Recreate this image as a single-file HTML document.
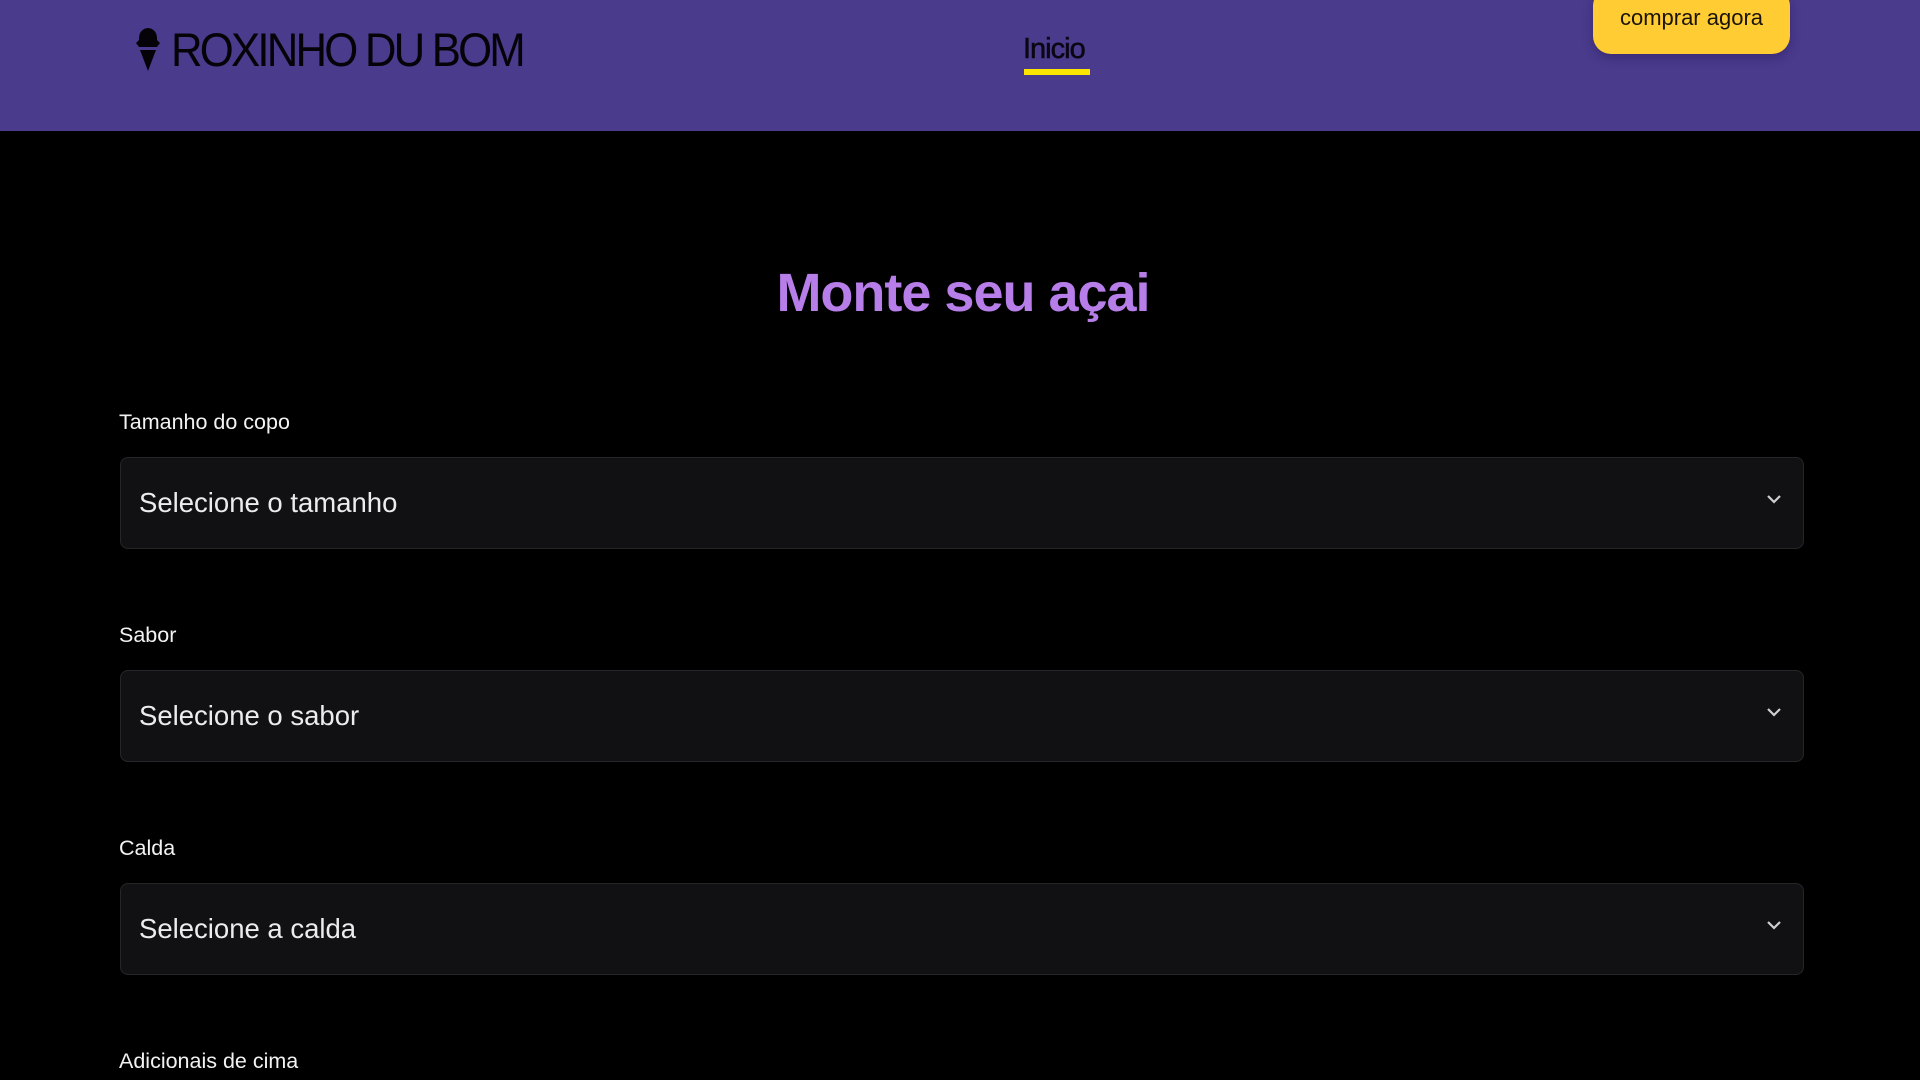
<!DOCTYPE html>
<html><head><meta charset="utf-8"><style>
*{margin:0;padding:0;box-sizing:border-box}
body{width:1920px;height:1080px;background:#000;overflow:hidden;font-family:"Liberation Sans",sans-serif;position:relative}
header{position:absolute;left:0;top:0;width:1920px;height:131px;background:#4a3b8c}
.logo{position:absolute;left:171px;top:22px;font-size:47px;color:#050308;letter-spacing:-3px;transform:scaleX(.93);transform-origin:left;white-space:nowrap}
.nav{position:absolute;left:1023px;top:33px;font-size:29px;color:#0a0612;letter-spacing:-1px;-webkit-text-stroke:.5px #0a0612}
.uline{position:absolute;left:1024px;top:69px;width:66px;height:6px;background:#ffe600}
.btn{position:absolute;left:1593px;top:-12px;width:197px;height:66px;background:#ffcc33;border-radius:18px;box-shadow:0 4px 10px rgba(30,20,80,.4);text-align:center;padding-top:17px;font-size:22px;color:#1a1408;white-space:nowrap}
h1{position:absolute;left:0;width:1926px;top:262px;text-align:center;font-size:54px;font-weight:bold;color:#b77ee9;letter-spacing:-1px}
.lab{position:absolute;left:119px;font-size:21.5px;color:#f2f2f2}
.sel{position:absolute;left:120px;width:1684px;height:92px;background:#111113;border:1.5px solid #26262a;border-radius:8px}
.sel span{position:absolute;left:18px;top:29px;font-size:27.5px;color:#ececec}
.sel svg{position:absolute;left:1645px;top:36px}
</style></head><body>
<header>
<svg style="position:absolute;left:134px;top:26px" width="28" height="46" viewBox="0 0 28 46"><path d="M5 12 A9 10 0 0 1 23 12 L23 14 L26 17 L23 21 L5 21 L2 17 L5 14 Z" fill="#050308"/><path d="M6 24 L22 24 L14 45 Z" fill="#050308"/></svg>
<div class="logo">ROXINHO DU BOM</div>
<div class="nav">Inicio</div><div class="uline"></div>
<div class="btn">comprar agora</div>
</header>
<h1>Monte seu açai</h1>
<div class="lab" style="top:410px">Tamanho do copo</div>
<div class="sel" style="top:457px"><span>Selecione o tamanho</span><svg width="16" height="10" viewBox="0 0 16 10"><path d="M2 2 L8 8 L14 2" stroke="#cfcfcf" stroke-width="2.2" fill="none"/></svg></div>
<div class="lab" style="top:623px">Sabor</div>
<div class="sel" style="top:670px"><span>Selecione o sabor</span><svg width="16" height="10" viewBox="0 0 16 10"><path d="M2 2 L8 8 L14 2" stroke="#cfcfcf" stroke-width="2.2" fill="none"/></svg></div>
<div class="lab" style="top:836px">Calda</div>
<div class="sel" style="top:883px"><span>Selecione a calda</span><svg width="16" height="10" viewBox="0 0 16 10"><path d="M2 2 L8 8 L14 2" stroke="#cfcfcf" stroke-width="2.2" fill="none"/></svg></div>
<div class="lab" style="top:1049px">Adicionais de cima</div>
</body></html>
